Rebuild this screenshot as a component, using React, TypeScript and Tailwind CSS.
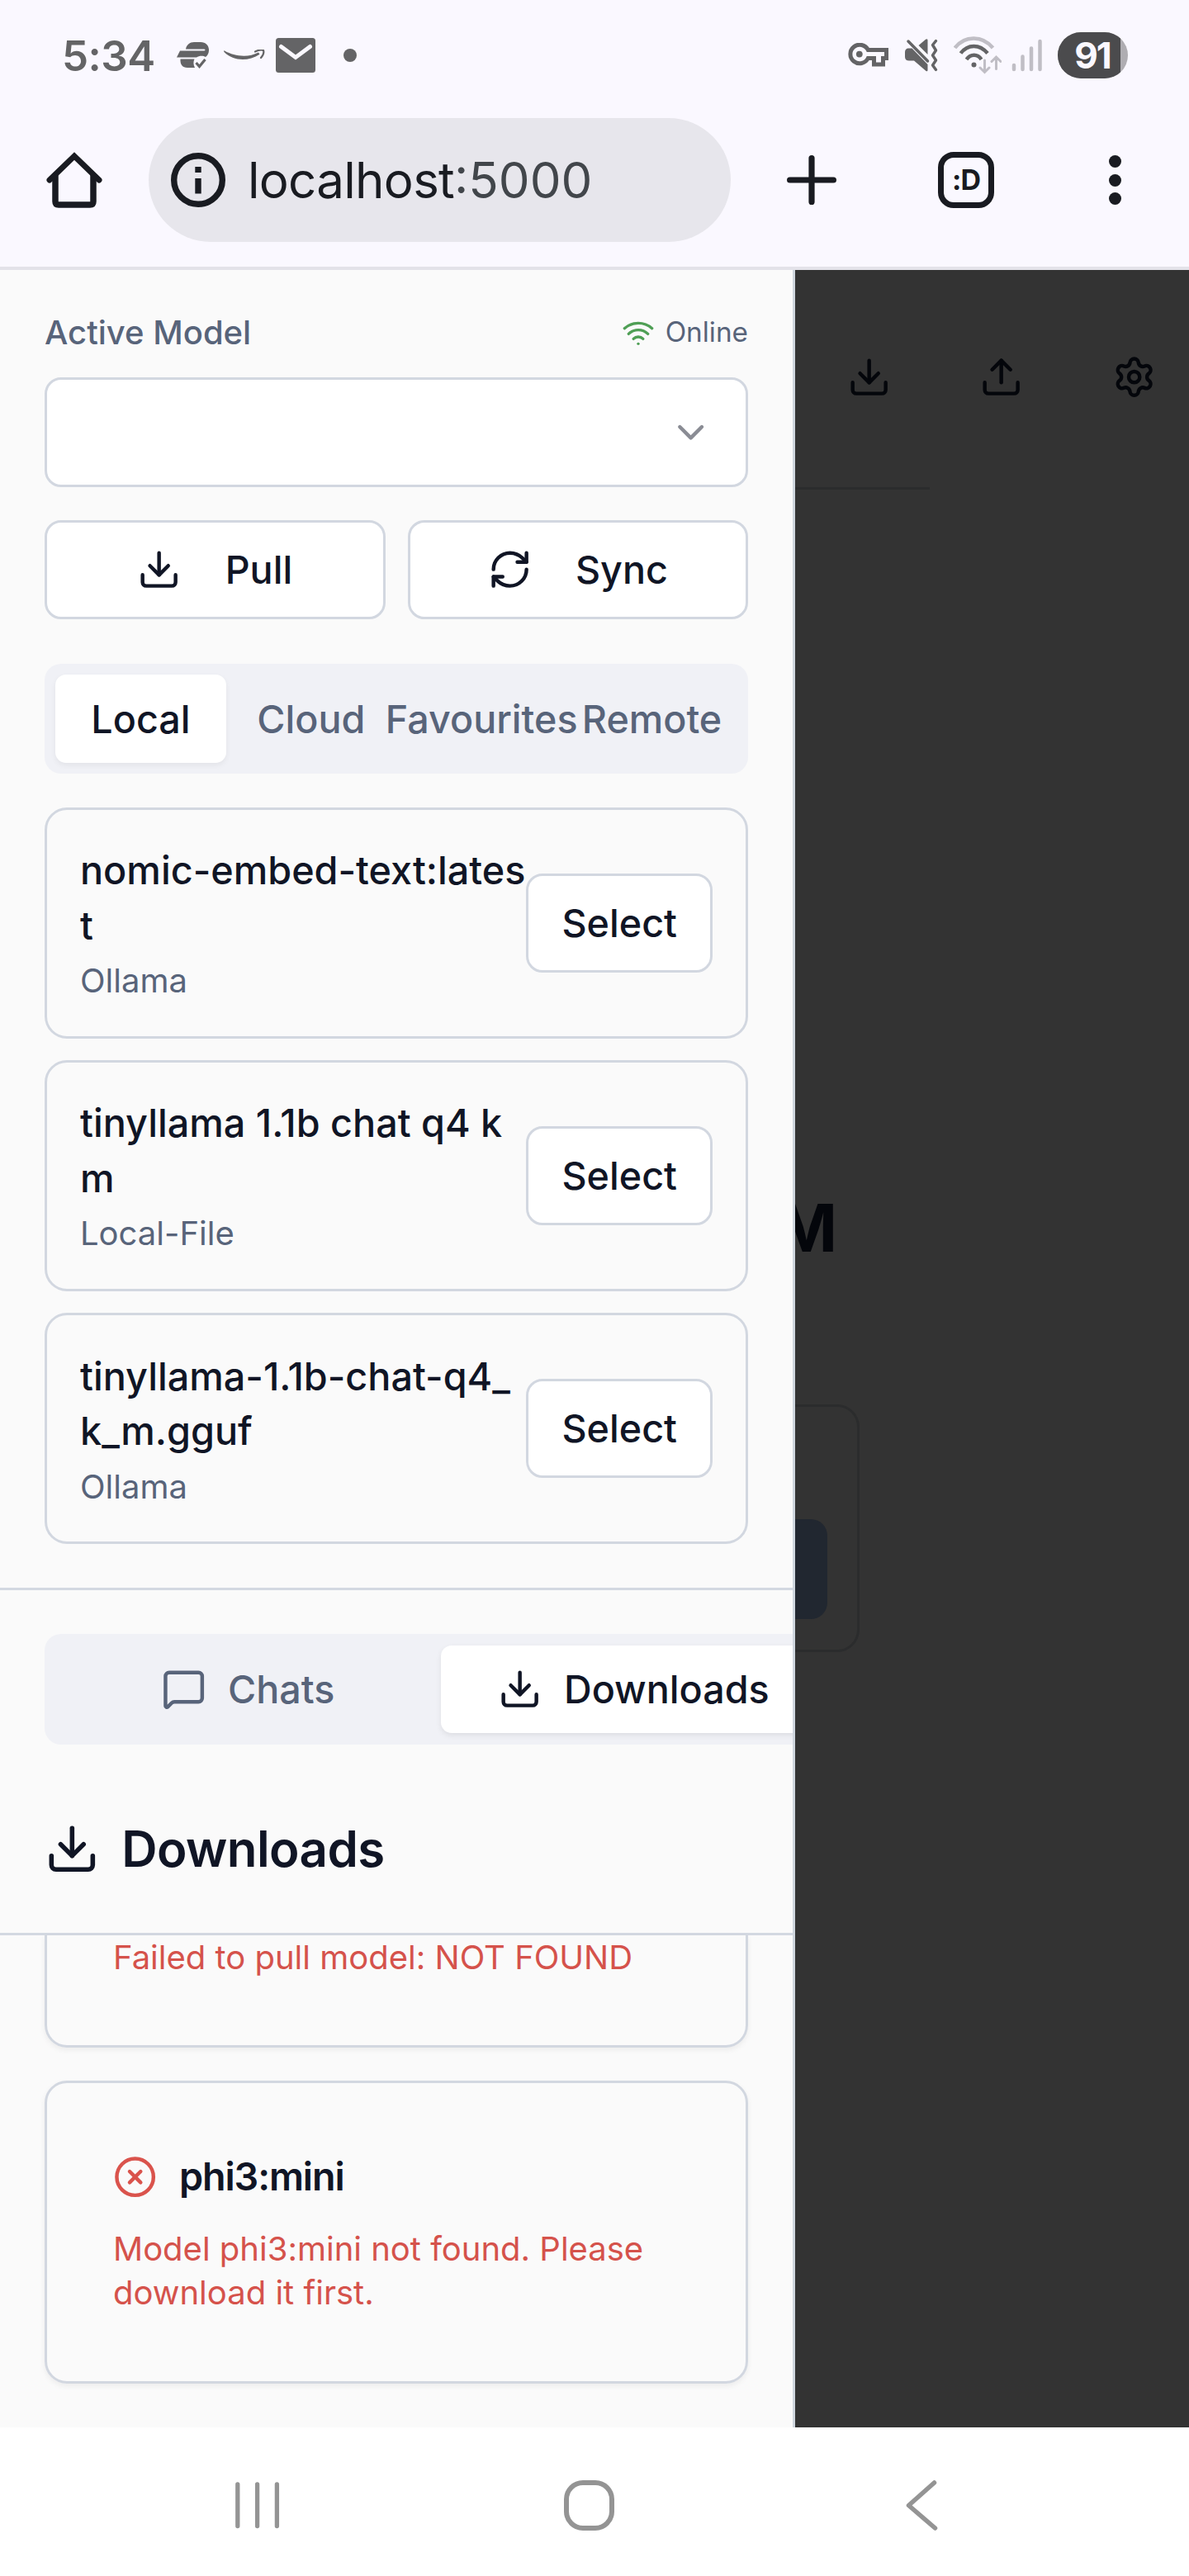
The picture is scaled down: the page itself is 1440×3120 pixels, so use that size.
import React from "react";
import {
  ChevronDown,
  CircleX,
  Download,
  MessageSquare,
  RefreshCw,
  Settings,
  Upload,
  Wifi,
} from "lucide-react";

/* ---------- system status bar ---------- */

function VpnCheckIcon() {
  return (
    <svg className="ml-[28px] h-[32px] w-[40px]" viewBox="0 0 40 32" fill="#646466">
      <path d="M11 8.500C12 3 16 0 21 0h8c6 0 10 4 10 9.500 0 4-1.500 6.500-4 8.500-3-1.800-8-1.500-11 0.500H0l4-8h29c2 0 2-2 0-2z" />
      <path d="M4.500 20.500h17c-1.500 3-1.500 7 .5 10.500H13c-6 0-9-4-8.500-10.500z" />
      <path d="M23.500 25l4 4.500 7-8.500" fill="none" stroke="#646466" strokeWidth="3.200" />
    </svg>
  );
}

function SmileArrowIcon() {
  return (
    <svg className="ml-[17px] h-[14px] w-[50px]" viewBox="0 0 50 14" fill="#646466">
      <path d="M1 1.500c12 7 29 8.500 41 2l1.500 2.200C30 14.500 12 14.500 .5 3-.2 2.100.2 1 1 1.500z" />
      <path d="M38 2.500C42 .5 46 0 48 1c.8 2-.5 6-3 9" fill="none" stroke="#646466" strokeWidth="2.200" strokeLinecap="round" />
    </svg>
  );
}

function MailIcon() {
  return (
    <svg className="ml-[13px] h-[42px] w-[48px]" viewBox="0 0 48 42">
      <rect width="48" height="42" rx="3.500" fill="#646466" />
      <path d="M6.500 10.500L24 23.500l17.500-13" fill="none" stroke="#faf8ff" strokeWidth="5" strokeLinecap="round" />
    </svg>
  );
}

function KeyIcon() {
  return (
    <svg className="h-[30px] w-[50px]" viewBox="0 0 50 30">
      <path
        d="M24.300 8.500H46.500V18.500H42.500V26H31.500V18.500H24.300A11.300 11.300 0 1 1 24.300 8.500Z"
        fill="none"
        stroke="#646466"
        strokeWidth="5"
      />
      <circle cx="13.800" cy="13.600" r="3.900" fill="#646466" />
    </svg>
  );
}

function MuteVibrateIcon() {
  return (
    <svg className="ml-[19px] h-[40px] w-[40px]" viewBox="0 0 40 40" fill="#646466">
      <path d="M0 16c0-3 2-4.500 4-4.500h4.500L27.500 31v7q0 2-2 1L11 26.500H5c-3 0-5-1.500-5-4.500z" />
      <path d="M16.500 8L25 .8q2.500-1.500 2.500 1V19z" />
      <path d="M4 3l23.500 24" stroke="#646466" strokeWidth="3.500" strokeLinecap="round" />
      <path
        d="M37.500 2.500L33.500 7.500L37.500 14L33.500 20L37.500 26L33.500 32L37.500 37.500"
        fill="none"
        stroke="#646466"
        strokeWidth="3.400"
        strokeLinecap="round"
        strokeLinejoin="round"
      />
    </svg>
  );
}

function WifiDataIcon() {
  return (
    <svg className="ml-[19px] h-[46px] w-[58px]" viewBox="0 0 58 46" fill="none" strokeLinecap="butt">
      <path d="M1.500 14C13-1.500 35-1.500 47.500 14" stroke="#c0bec5" strokeWidth="4.500" />
      <path d="M8.500 20.500C17 9 31.500 9 41 20.500" stroke="#646466" strokeWidth="4.500" />
      <path d="M15.500 28C20.500 21 29 21 33.500 28" stroke="#646466" strokeWidth="4.500" />
      <circle cx="24.500" cy="34.500" r="3" fill="#646466" />
      <path d="M37.500 29v14M32 38l5.500 5.500L43 38M51.500 39.500V26M46 30.500l5.500-5.500 5.500 5.500" stroke="#c0bec5" strokeWidth="3" strokeLinecap="round" />
    </svg>
  );
}

function SignalIcon() {
  return (
    <svg className="ml-[12px] h-[40px] w-[38px]" viewBox="0 0 38 40" stroke="#c0bec5" strokeWidth="4.500" strokeLinecap="round">
      <path d="M3 37v-5M13.500 37V21.500M24 37V11.500M34.500 37V3" />
    </svg>
  );
}

function StatusBar() {
  return (
    <div className="flex h-[134px] items-center pl-[75px] pr-[74px]">
      <span className="w-[111px] text-[51px] leading-none font-semibold tracking-[-0.500px] text-[#646466]">5:34</span>
      <VpnCheckIcon />
      <SmileArrowIcon />
      <MailIcon />
      <span className="ml-[34px] size-4 rounded-full bg-[#646466]" />
      <div className="ml-auto flex items-center">
        <KeyIcon />
        <MuteVibrateIcon />
        <WifiDataIcon />
        <SignalIcon />
        <div className="ml-[18px] flex h-[56px] w-[85px] overflow-hidden rounded-[28px] bg-[#afadb2]">
          <span className="flex w-[76px] items-center justify-center bg-[#4b4b4d] pl-[8px] text-[44px] leading-none font-bold tracking-[-2px] text-[#faf8ff]">
            91
          </span>
        </div>
      </div>
    </div>
  );
}

/* ---------- browser toolbar ---------- */

function BrowserBar() {
  return (
    <div className="flex h-[193px] items-start border-b-[4px] border-[#e3e2e9] pt-[9px] pl-[56px]">
      <div className="flex h-[150px] items-center">
        <svg className="h-[68px] w-[68px]" viewBox="0 0 68 68" fill="none" stroke="#191b21" strokeWidth="7.500" strokeLinecap="round">
          <path d="M11 29v31q0 4 4 4h38q4 0 4-4V29" />
          <path d="M4 34L34 5l30 29" strokeWidth="7" />
        </svg>
        <div className="ml-[56px] flex h-[150px] w-[705px] items-center rounded-full bg-[#e7e6ec] pl-[27px]">
          <svg className="h-[66px] w-[66px]" viewBox="0 0 66 66">
            <circle cx="33" cy="33" r="29.300" fill="none" stroke="#191b21" strokeWidth="7.400" />
            <path d="M29.300 17h7.400v7h-7.400zM29.300 31h7.400v18.500h-7.400z" fill="#191b21" />
          </svg>
          <span className="ml-[27px] text-[60px] leading-none whitespace-nowrap text-[#191b21]">
            <span className="tracking-[-0.700px]">localhost</span>
            <span className="text-[#42464b]">:5000</span>
          </span>
        </div>
        <svg className="ml-[68px] h-[60px] w-[60px]" viewBox="0 0 60 60" stroke="#191b21" strokeWidth="7.200" strokeLinecap="round">
          <path d="M30 3.600v52.800M3.600 30h52.800" />
        </svg>
        <div className="ml-[123px] flex h-[68px] w-[68px] items-center justify-center rounded-[19px] border-[7px] border-[#191b21]">
          <span className="text-[34px] leading-none font-bold tracking-[-1px] text-[#191b21]">:D</span>
        </div>
        <div className="ml-[139px] flex flex-col gap-[7.500px]">
          <span className="size-[15px] rounded-full bg-[#191b21]" />
          <span className="size-[15px] rounded-full bg-[#191b21]" />
          <span className="size-[15px] rounded-full bg-[#191b21]" />
        </div>
      </div>
    </div>
  );
}

/* ---------- sidebar ---------- */

const models = [
  { lines: ["nomic-embed-text:lates", "t"], source: "Ollama" },
  { lines: ["tinyllama 1.1b chat q4 k", "m"], source: "Local-File" },
  { lines: ["tinyllama-1.1b-chat-q4_", "k_m.gguf"], source: "Ollama" },
];

function ModelCard({ lines, source }: { lines: string[]; source: string }) {
  return (
    <div className="flex h-[279.600px] items-center rounded-[27px] border-[3px] border-[#d2d7e0] px-[40px]">
      <div className="min-w-0 flex-1">
        {lines.map((line) => (
          <div key={line} className="text-[46.750px] leading-[66.670px] font-medium whitespace-nowrap text-[#101525]">
            {line}
          </div>
        ))}
        <div className="mt-[6.670px] text-[40px] leading-[53.330px] text-[#58647a]">{source}</div>
      </div>
      <button className="h-[120px] shrink-0 rounded-[20px] border-[3px] border-[#d2d7e0] bg-white px-[40px] text-[46.670px] font-medium text-[#101525]">
        Select
      </button>
    </div>
  );
}

function SourceTabs() {
  return (
    <div className="mt-[54px] grid h-[133.300px] grid-cols-4 rounded-[20px] bg-[#f0f1f6] p-[13.300px] text-[46.670px] font-medium text-[#58647a]">
      <div className="flex items-center justify-center rounded-[13px] bg-white text-[#101525] shadow-[0_3px_7px_rgba(0,0,0,0.06)]">Local</div>
      <div className="flex items-center justify-center">Cloud</div>
      <div className="flex items-center justify-center">Favourites</div>
      <div className="flex items-center justify-center">Remote</div>
    </div>
  );
}

function Sidebar() {
  const outline =
    "flex h-[120px] items-center justify-center gap-[53px] rounded-[20px] border-[3px] border-[#d2d7e0] bg-white";
  return (
    <aside className="relative z-10 flex w-[963px] shrink-0 flex-col overflow-hidden border-r-[3px] border-[#cfd6de] bg-[#fafafa] text-[#101525]">
      <section className="h-[1599px] shrink-0 border-b-[3px] border-[#d3d8e1] px-[54px] pt-[49px]">
        <div className="flex h-[53px] items-center justify-between text-[#58647a]">
          <span className="text-[40px] leading-none font-medium">Active Model</span>
          <span className="flex items-center gap-[13px] text-[33.300px] leading-none">
            <Wifi size={40} color="#4f9f55" />
            Online
          </span>
        </div>
        <div className="mt-[27.500px] flex h-[133.500px] items-center justify-end rounded-[20px] border-[3px] border-[#d2d7e0] bg-white pr-[40px]">
          <ChevronDown size={53.3} color="#8a8c94" />
        </div>
        <div className="mt-[40px] grid grid-cols-2 gap-[27px] text-[46.670px] font-medium">
          <button className={outline}>
            <Download size={53.3} />
            Pull
          </button>
          <button className={outline}>
            <RefreshCw size={53.3} />
            Sync
          </button>
        </div>
        <SourceTabs />
        <div className="mt-[40.700px] flex flex-col gap-[26.670px]">
          {models.map((m) => (
            <ModelCard key={m.lines[0]} {...m} />
          ))}
        </div>
      </section>

      <section className="h-[417.500px] shrink-0 border-b-[3px] border-[#d3d8e1] pt-[53.300px] pl-[54px]">
        <div className="grid h-[133.300px] w-[960px] grid-cols-2 rounded-[20px] bg-[#f0f1f6] p-[13.300px] text-[46.670px] font-medium">
          <div className="flex items-center justify-center gap-[26.700px] text-[#58647a]">
            <MessageSquare size={53.3} />
            Chats
          </div>
          <div className="flex items-center justify-center gap-[26.700px] rounded-[13px] bg-white shadow-[0_3px_7px_rgba(0,0,0,0.08)]">
            <Download size={53.3} />
            Downloads
          </div>
        </div>
        <h2 className="mt-[86.500px] flex h-[80px] items-center gap-[26.700px] text-[60px] font-semibold tracking-[-0.600px]">
          <Download size={66.67} />
          Downloads
        </h2>
      </section>

      <section className="flex min-h-0 flex-1 flex-col gap-[40px] px-[54px]">
        <div className="h-[136.500px] shrink-0 rounded-b-[27px] border-[3px] border-t-0 border-[#d2d7e0] px-[80px] text-[40px] leading-[53.330px] text-[#d5524b] shadow-[0_3px_7px_rgba(0,0,0,0.06)]">
          <p>Failed to pull model: NOT FOUND</p>
        </div>
        <div className="h-[366.500px] shrink-0 rounded-[27px] border-[3px] border-[#d2d7e0] p-[80px] shadow-[0_3px_7px_rgba(0,0,0,0.06)]">
          <h3 className="flex items-center gap-[26.700px] text-[46.670px] leading-[66.670px] font-semibold tracking-[-1.100px]">
            <CircleX size={53.3} color="#da534c" />
            phi3:mini
          </h3>
          <p className="mt-[27px] text-[40px] leading-[53.330px] whitespace-nowrap text-[#d5524b]">
            Model phi3:mini not found. Please
            <br />
            download it first.
          </p>
        </div>
      </section>
    </aside>
  );
}

/* ---------- dimmed page behind the sidebar ---------- */

function DimmedPage() {
  return (
    <main className="flex flex-1 flex-col overflow-hidden bg-[#333333] text-[#04060b]">
      <header className="flex h-[263px] w-full items-center pb-[4px] pl-[63px]">
        <Download size={53.3} className="shrink-0" />
        <Upload size={53.3} className="ml-[107px] shrink-0" />
        <Settings size={53.3} className="ml-[107px] shrink-0" />
      </header>
      <div className="h-[3px] w-[163px] bg-[#2b2c2d]" />
      <div className="mt-[849px] flex h-[90px] w-[51px] items-center justify-end text-[80px] leading-none font-bold">M</div>
      <div className="mt-[169px] h-[300px] w-[78px] rounded-r-[27px] border-[3px] border-l-0 border-[#2b2c2d] pt-[136px]">
        <div className="h-[120.500px] w-[39px] rounded-r-[20px] bg-[#212730]" />
      </div>
    </main>
  );
}

/* ---------- system navigation ---------- */

function NavBar() {
  return (
    <div className="flex h-[180px] items-start bg-white pt-[64px] pl-[285px]">
      <svg className="h-[61px] w-[54px]" viewBox="0 0 54 61" stroke="#949494" strokeWidth="5.300" strokeLinecap="round">
        <path d="M2.800 5v50.500M26.600 5v50.500M50.400 5v50.500" />
      </svg>
      <div className="ml-[344px] h-[61px] w-[61px] rounded-[23px] border-[6px] border-[#949494]" />
      <svg className="ml-[353px] h-[61px] w-[39px]" viewBox="0 0 39 61" fill="none" stroke="#949494" strokeWidth="5.500" strokeLinecap="round" strokeLinejoin="round">
        <path d="M34.500 3L3.500 30.500 35.500 58" />
      </svg>
    </div>
  );
}

export default function App() {
  return (
    <div className="flex h-[3120px] w-[1440px] flex-col overflow-hidden bg-white font-['Inter',sans-serif]">
      <div className="bg-[#faf8ff]">
        <StatusBar />
        <BrowserBar />
      </div>
      <div className="flex h-[2613px] shrink-0">
        <Sidebar />
        <DimmedPage />
      </div>
      <NavBar />
    </div>
  );
}
